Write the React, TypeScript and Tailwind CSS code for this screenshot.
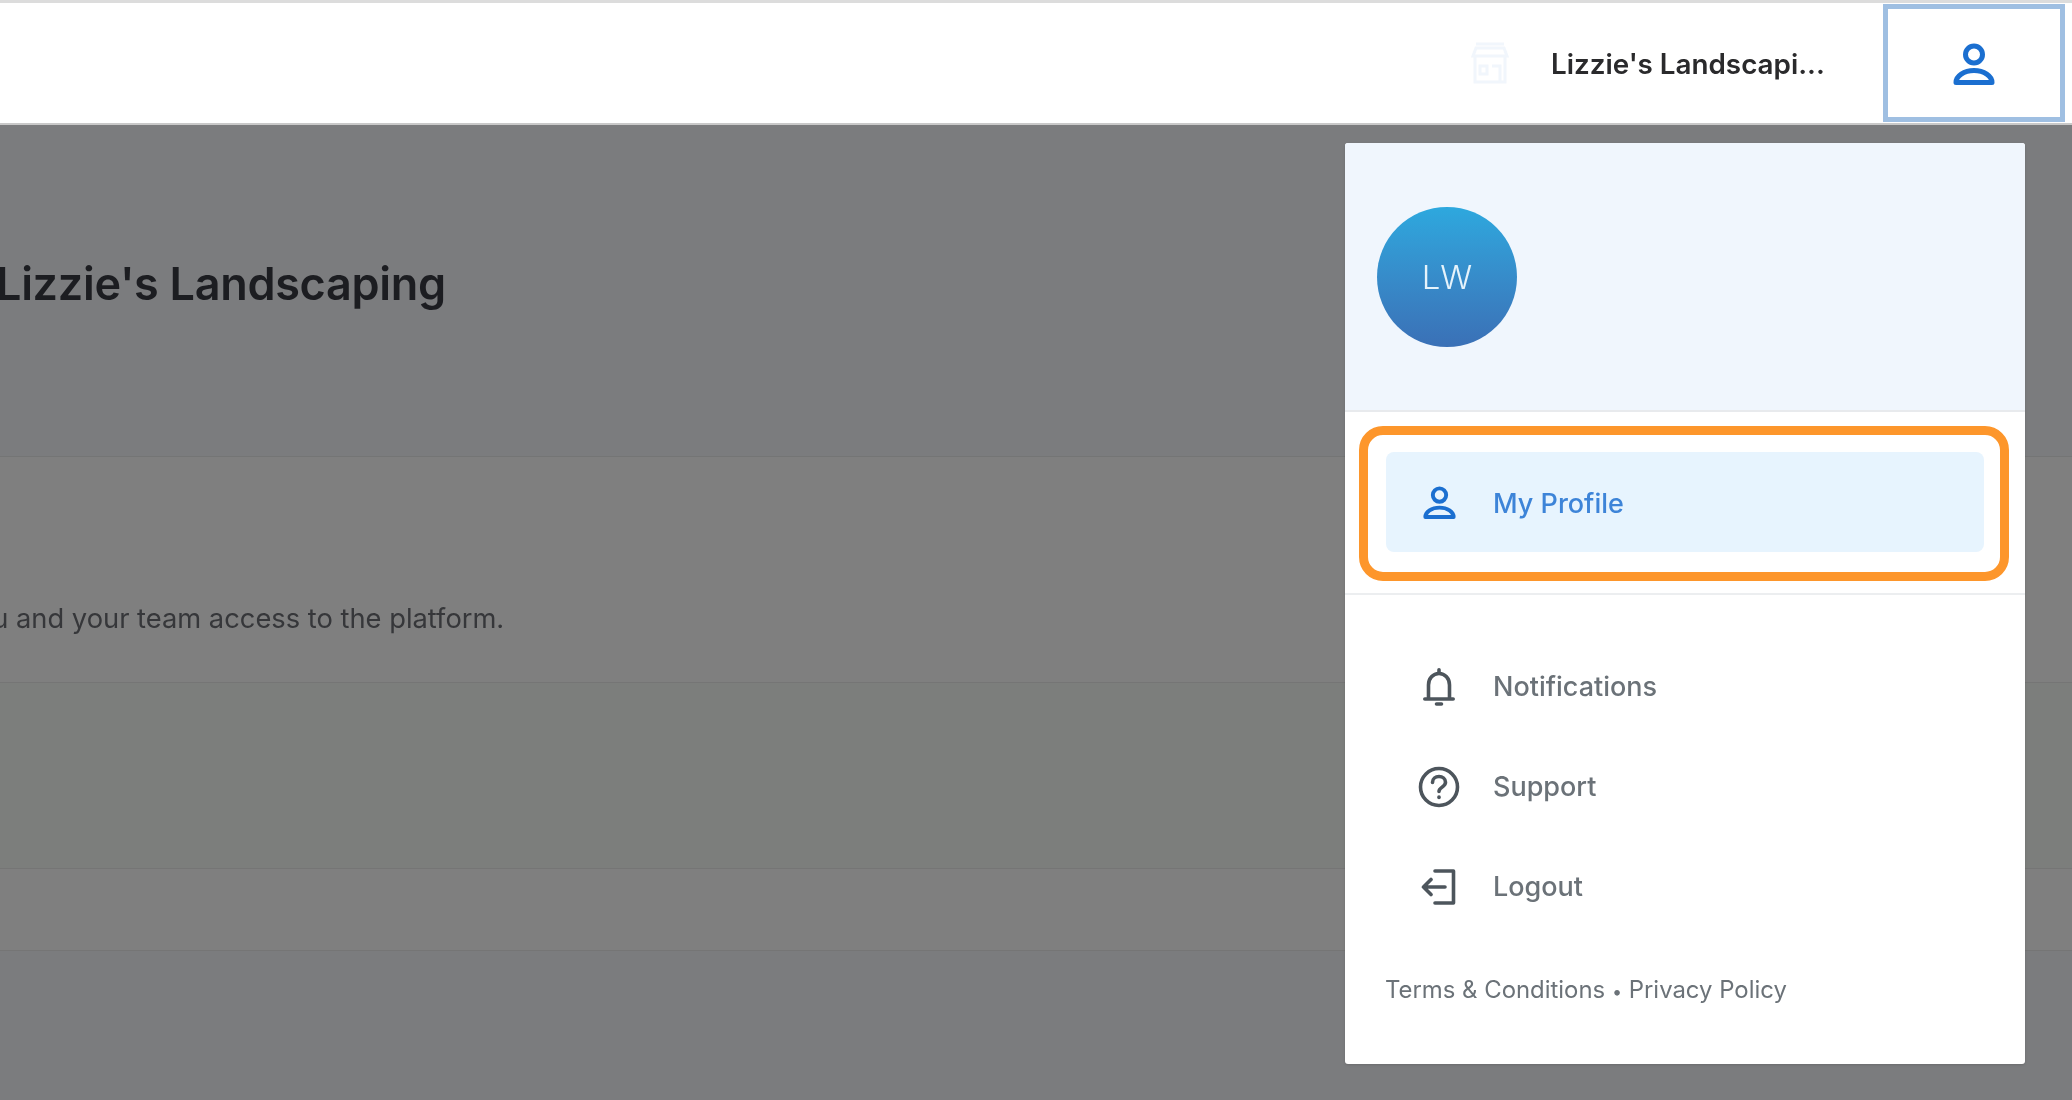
import { ReactNode } from "react"

const INTER = "font-['Inter',sans-serif]"

function PersonIcon({ className }: { className: string }) {
  return (
    <svg viewBox="0 0 42 42" fill="none" stroke="currentColor" strokeWidth="5" className={className}>
      <circle cx="21" cy="11.500" r="8.500" />
      <path d="M3 39.500C3 33 11 27.500 21 27.500S39 33 39 39.500z" strokeLinejoin="round" />
    </svg>
  )
}

function BellIcon() {
  return (
    <svg viewBox="0 0 32 38" fill="none" stroke="currentColor" strokeWidth="3.600" className="w-[32px] h-[38px]" strokeLinecap="round">
      <path d="M1.800 31h28.400M5.500 31V17c0-6.500 4.500-11.500 10.500-11.500S26.500 10.500 26.500 17v14" />
      <path d="M16 1.800v3M13.500 36h5" />
    </svg>
  )
}

function HelpIcon() {
  return (
    <svg viewBox="0 0 42 42" fill="none" stroke="currentColor" strokeWidth="3.600" className="w-[42px] h-[42px]" strokeLinecap="round">
      <circle cx="21" cy="21" r="18.500" />
      <path d="M14.500 16.500c0-3.800 3-6 6.500-6s6.500 2.300 6.500 5.700c0 4.800-6.500 5-6.500 9.300" />
      <path d="M21 31v.5" />
    </svg>
  )
}

function LogoutIcon() {
  return (
    <svg viewBox="0 0 36 36" fill="none" stroke="currentColor" strokeWidth="3.600" className="w-[36px] h-[36px]" strokeLinecap="round" strokeLinejoin="round">
      <path d="M14 2h18.500v32H14" />
      <path d="M24 18H2.500M10 10.500 2.500 18l7.500 7.500" />
    </svg>
  )
}

function MenuRow({ icon, label, active }: { icon: ReactNode; label: string; active?: boolean }) {
  return (
    <div
      className={
        active
          ? "h-[100px] flex items-center pl-[31px] gap-[32px] rounded-lg bg-[#e7f4fe] text-[#1b6fd0]"
          : "h-[100px] flex items-center pl-[31px] gap-[32px] text-[#4d555c]"
      }
    >
      <span className="w-[44px] flex justify-center">{icon}</span>
      <span className={active ? "text-[27px] font-medium text-[#3d84d8] pt-[5px]" : "text-[27px] font-medium text-[#6b7278]"}>{label}</span>
    </div>
  )
}

export default function App() {
  return (
    <div className={`${INTER} relative w-[2072px] h-[1100px] overflow-hidden bg-[#7b7c7e] blur-[0.7px]`}>
      <header className="h-[125px] bg-white border-t-[3px] border-t-[#dcdcdc] border-b-2 border-b-[#c9c9c9] flex items-center justify-end pr-[7px]">
        <svg viewBox="0 0 40 42" fill="none" stroke="#f1f6fc" strokeWidth="3" className="w-[40px] h-[42px] mr-[41px]">
          <path d="M6 2h28M3 14 6 6h28l3 8zM5 14v26h30V14M22 24h8v16M10 24h7v8h-7z" />
        </svg>
        <span className="text-[27.8px] font-semibold text-[#2a2a2c] w-[332px] whitespace-nowrap pt-[3px]">Lizzie's Landscapi...</span>
        <button className="w-[182px] h-[118px] border-[5px] border-[#9fbfe2] bg-white flex items-center justify-center text-[#1b6fd0] pt-[2px]">
          <PersonIcon className="w-[42px] h-[42px]" />
        </button>
      </header>

      <main>
        <section className="h-[332px] bg-[#7b7c7e] border-b border-[#747575] pt-[130px]">
          <h1 className="text-[45px] leading-[58px] font-semibold tracking-[-0.3px] text-[#1c1d21] whitespace-nowrap ml-[-4px]">Lizzie's Landscaping</h1>
        </section>
        <section className="h-[226px] bg-[#7f7f7f] border-b border-[#757575] pt-[144px]">
          <p className="text-[27.3px] leading-[36px] text-[#36373a] whitespace-nowrap ml-[-39px]">you and your team access to the platform.</p>
        </section>
        <section className="h-[186px] bg-[#7c7e7c] border-b border-[#757575]" />
        <section className="h-[82px] bg-[#7f7f7f] border-b border-[#757575]" />
      </main>

      <div className="absolute top-[143px] right-[47px] w-[680px] h-[921px] bg-white rounded-[3px] shadow-sm overflow-hidden">
        <div className="h-[269px] bg-[#f0f6fd] border-b-2 border-[#e8eaed] flex items-center pl-[32px]">
          <div className="w-[140px] h-[140px] rounded-full bg-gradient-to-b from-[#2da8de] to-[#3a70b6] flex items-center justify-center text-[#e6f3fb] text-[33px] font-light pt-[3px]">
            LW
          </div>
        </div>
        <div className="px-[41px] pt-[40px] pb-[41px] border-b-2 border-[#eceef0]">
          <MenuRow active icon={<PersonIcon className="w-[33px] h-[33px]" />} label="My Profile" />
        </div>
        <div className="px-[41px] pt-[42px]">
          <MenuRow icon={<BellIcon />} label="Notifications" />
          <MenuRow icon={<HelpIcon />} label="Support" />
          <MenuRow icon={<LogoutIcon />} label="Logout" />
          <p className="mt-[37px] ml-[-1px] text-[23.9px] leading-[32px] text-[#6b7278] whitespace-nowrap">Terms &amp; Conditions <span className="text-[18px]">•</span> Privacy Policy</p>
        </div>
        <div className="absolute left-[14px] top-[283px] w-[650px] h-[155px] border-[9px] border-[#fd962b] rounded-[24px]" />
      </div>
    </div>
  )
}
